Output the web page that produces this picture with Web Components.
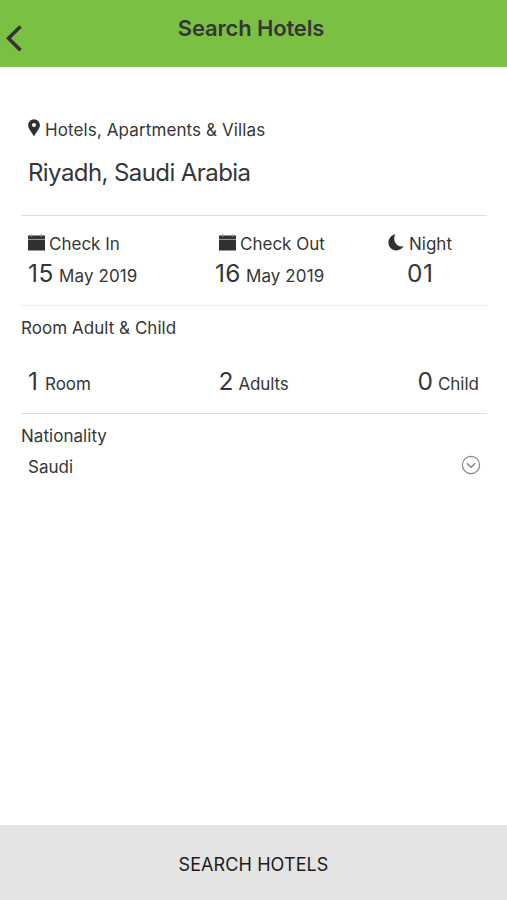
<!DOCTYPE html>
<html lang="en">
<head>
<meta charset="UTF-8">
<title>Search Hotels</title>
<style>
  body {
    margin: 0;
    background: #ffffff;
    font-family: Inter, Roboto, sans-serif;
    color: #363636;
  }
</style>
</head>
<body>
<hotel-search-page>
  <nav-header slot="header">Search Hotels</nav-header>

  <form-section class="place">
    <icon-label icon="pin" style="--gap: 5px; --spacing: 0.11px">Hotels, Apartments &amp; Villas</icon-label>
    <city-name>Riyadh, Saudi Arabia</city-name>
  </form-section>

  <form-section class="dates">
    <stay-field style="--inset: 7px">
      <icon-label slot="label" icon="calendar">Check In</icon-label>
      <value-text number="15" style="--spacing: 0.1px; --number-spacing: 0.6px">May 2019</value-text>
    </stay-field>
    <stay-field style="--inset: 3px; --label-inset: 4px">
      <icon-label slot="label" icon="calendar">Check Out</icon-label>
      <value-text number="16" style="--spacing: 0.1px; --number-spacing: 0.4px">May 2019</value-text>
    </stay-field>
    <stay-field style="--inset: 0px; --value-inset: 19px">
      <icon-label slot="label" icon="moon" style="--gap: 5px">Night</icon-label>
      <value-text number="01" style="--number-spacing: 0.6px"></value-text>
    </stay-field>
  </form-section>

  <form-section class="guests">
    <field-title>Room Adult &amp; Child</field-title>
    <guest-row>
      <value-text number="1" style="--gap: 7px">Room</value-text>
      <value-text number="2" style="--spacing: -0.15px">Adults</value-text>
      <value-text number="0">Child</value-text>
    </guest-row>
  </form-section>

  <form-section class="nation">
    <field-title>Nationality</field-title>
    <select-row>Saudi</select-row>
  </form-section>

  <bottom-button slot="footer">SEARCH HOTELS</bottom-button>
</hotel-search-page>

<script>
const ICONS = {
  pin: `<svg width="12" height="18" viewBox="0 0 12 18">
    <path fill="#303030" fill-rule="evenodd" d="M6 .2A5.900 5.900 0 0 0 .1 6.200C.1 9.500 3.500 12.800 6 17.400 8.500 12.800 11.900 9.500 11.900 6.200A5.900 5.900 0 0 0 6 .2zM6 4a2 2 0 1 1 0 4 2 2 0 0 1 0-4z"/>
  </svg>`,
  calendar: `<svg width="17" height="17" viewBox="0 0 17 17">
    <path fill="#303030" d="M0 1.500h17V5H0zM0 5.700h17V16.500H0z"/>
    <path stroke="#8c8c8c" stroke-width="1.200" d="M3.700.3v2.700M13.300.3v2.700"/>
    <path stroke="#777" stroke-width=".8" d="M0 5.300h17"/>
  </svg>`,
  moon: `<svg width="16" height="17" viewBox="0 0 16 17">
    <path fill="#303030" d="M7.300.2C2.900 1.300.4 4.700.4 8.500c0 4.400 3.300 7.900 7.700 7.900 3.300 0 5.900-1.500 7.500-4.400-1.700.6-3.600.7-5.200-.3C6.300 9.400 5.100 4.500 7.300.2z"/>
  </svg>`,
};

// Small helper: open shadow root with the given markup
class BaseElement extends HTMLElement {
  constructor() {
    super();
    this.attachShadow({ mode: 'open' });
  }

  connectedCallback() {
    this.shadowRoot.innerHTML = this.template();
  }
}

class HotelSearchPage extends BaseElement {
  template() {
    return `
      <style>
        :host { display: flex; flex-direction: column; height: 900px; }
        main { flex: 1; padding: 0 20px 0 21px; }
      </style>
      <slot name="header"></slot>
      <main><slot></slot></main>
      <slot name="footer"></slot>
    `;
  }
}

class NavHeader extends BaseElement {
  template() {
    return `
      <style>
        :host {
          display: grid;
          grid-template-columns: 60px 1fr 65px;
          height: 67px;
          background: #7ac143;
        }
        svg { margin: 24px 0 0 5px; }
        h1 {
          margin: 12px 0 0;
          font-size: 22px;
          font-weight: 600;
          line-height: 32px;
          text-align: center;
          white-space: nowrap;
          letter-spacing: -0.15px;
        }
      </style>
      <svg width="18" height="29" viewBox="0 0 18 29">
        <path d="M15.500 2.500L3.500 14.300 15.500 26.300" fill="none" stroke="#333" stroke-width="3.500"/>
      </svg>
      <h1><slot></slot></h1>
    `;
  }
}

class FormSection extends BaseElement {
  template() {
    return `
      <style>
        :host { display: block; box-sizing: border-box; border-bottom: 1px solid #dedede; }
        :host(.place) { height: 149px; padding: 51px 7px 0; }
        :host(.dates) {
          display: grid;
          grid-template-columns: 191px 176px 1fr;
          height: 90px;
          padding-top: 16px;
          border-color: #ececec;
        }
        :host(.guests) { height: 108px; padding-top: 10px; }
        :host(.nation) { border: 0; padding-top: 10px; }
      </style>
      <slot></slot>
    `;
  }
}

class IconLabel extends BaseElement {
  template() {
    return `
      <style>
        :host {
          display: flex;
          align-items: center;
          gap: var(--gap, 4px);
          height: 24px;
          font-size: 17px;
          line-height: 24px;
          letter-spacing: var(--spacing, 0);
          white-space: nowrap;
        }
        svg { flex: none; margin-top: -4px; }
      </style>
      ${ICONS[this.getAttribute('icon')]}<span><slot></slot></span>
    `;
  }
}

class CityName extends BaseElement {
  template() {
    return `
      <style>
        :host {
          display: block;
          margin-top: 15px;
          font-size: 24px;
          line-height: 32px;
          letter-spacing: -0.58px;
          white-space: nowrap;
        }
      </style>
      <slot></slot>
    `;
  }
}

class StayField extends BaseElement {
  template() {
    return `
      <style>
        :host { display: block; padding-left: var(--inset); }
        .label { padding-left: var(--label-inset, 0px); }
        .value { padding-left: var(--value-inset, 0px); margin-top: 1px; }
      </style>
      <div class="label"><slot name="label"></slot></div>
      <div class="value"><slot></slot></div>
    `;
  }
}

class ValueText extends BaseElement {
  template() {
    return `
      <style>
        :host {
          display: flex;
          align-items: baseline;
          gap: var(--gap, 5px);
          font-size: 17px;
          line-height: 32px;
          letter-spacing: var(--spacing, 0);
          white-space: nowrap;
        }
        b { font-size: 24.500px; font-weight: 400; letter-spacing: var(--number-spacing, 0); }
      </style>
      <b>${this.getAttribute('number')}</b><span><slot></slot></span>
    `;
  }
}

class FieldTitle extends BaseElement {
  template() {
    return `
      <style>
        :host { display: block; font-size: 17px; line-height: 24px; letter-spacing: 0.04px; white-space: nowrap; }
      </style>
      <slot></slot>
    `;
  }
}

class GuestRow extends BaseElement {
  template() {
    return `
      <style>
        :host {
          display: grid;
          grid-template-columns: 190.500px 1fr auto;
          margin-top: 25px;
          padding: 0 8px 0 7px;
        }
      </style>
      <slot></slot>
    `;
  }
}

class SelectRow extends BaseElement {
  template() {
    return `
      <style>
        :host {
          display: flex;
          justify-content: space-between;
          align-items: center;
          margin-top: 7px;
          padding: 0 6.500px 0 7px;
          font-size: 17px;
          line-height: 24px;
        }
        svg { margin-top: -4px; }
      </style>
      <span><slot></slot></span>
      <svg width="20" height="20" viewBox="0 0 20 20" fill="none" stroke="#858585">
        <circle cx="10" cy="10" r="8.600" stroke-width="1.200"/>
        <path d="M5.800 8.300L10 12.300l4.200-4" stroke-width="1.500"/>
      </svg>
    `;
  }
}

class BottomButton extends BaseElement {
  template() {
    return `
      <style>
        :host { display: block; height: 75px; background: #e4e4e4; }
        button {
          width: 100%;
          height: 100%;
          padding: 4px 0 0;
          border: 0;
          background: none;
          color: #1c1c1c;
          font: 18px Inter, Roboto, sans-serif;
          letter-spacing: 0.1px;
        }
      </style>
      <button><slot></slot></button>
    `;
  }
}

customElements.define('hotel-search-page', HotelSearchPage);
customElements.define('nav-header', NavHeader);
customElements.define('form-section', FormSection);
customElements.define('icon-label', IconLabel);
customElements.define('city-name', CityName);
customElements.define('stay-field', StayField);
customElements.define('value-text', ValueText);
customElements.define('field-title', FieldTitle);
customElements.define('guest-row', GuestRow);
customElements.define('select-row', SelectRow);
customElements.define('bottom-button', BottomButton);
</script>
</body>
</html>
